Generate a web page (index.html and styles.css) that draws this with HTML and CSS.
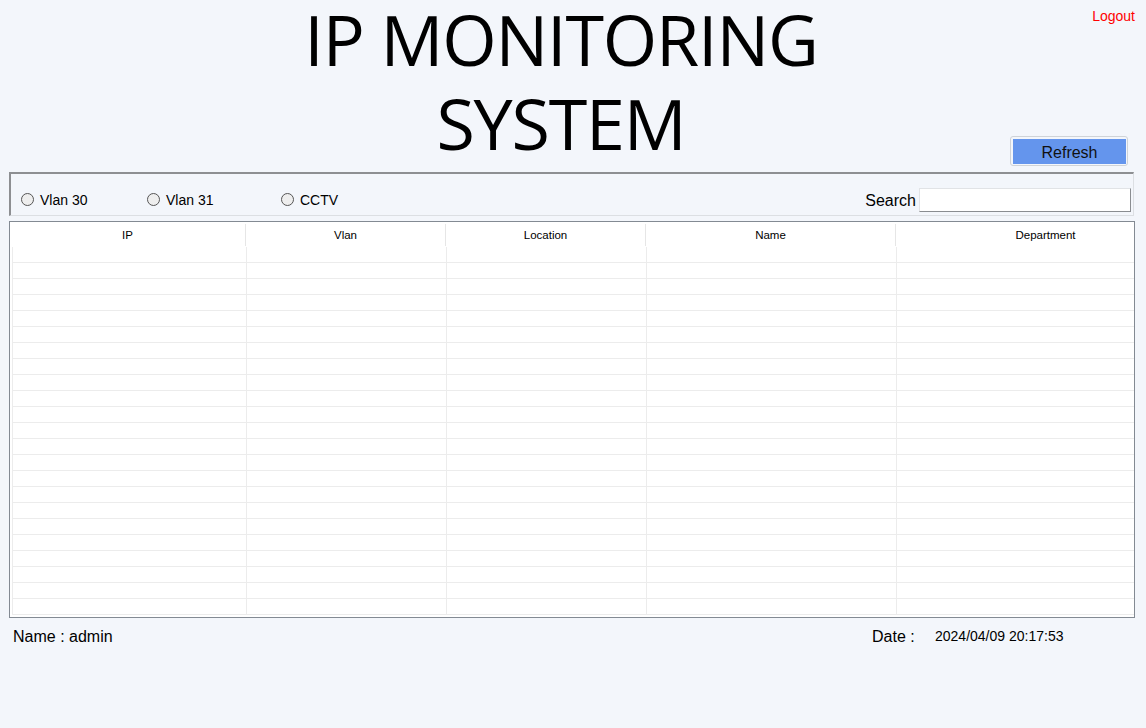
FILE: index.html
```html
<!DOCTYPE html>
<html>
<head>
<meta charset="utf-8">
<link rel="stylesheet" href="styles.css">
</head>
<body>
<div class="page">
  <header class="top">
    <h1 class="title"><span class="tl">IP MONITORING</span><span class="tl">SYSTEM</span></h1>
    <a class="logout" href="#">Logout</a>
    <div class="refresh-wrap"><button class="refresh">Refresh</button></div>
  </header>

  <section class="filter">
    <label class="opt opt-a"><input type="radio" name="vlan" class="radio"><span>Vlan 30</span></label>
    <label class="opt opt-b"><input type="radio" name="vlan" class="radio"><span>Vlan 31</span></label>
    <label class="opt"><input type="radio" name="vlan" class="radio"><span>CCTV</span></label>
    <div class="search">
      <span class="search-label">Search</span>
      <input class="search-input" type="text">
    </div>
  </section>

  <section class="grid">
    <div class="grid-head">
      <div class="hc c1">IP</div>
      <div class="hc c2">Vlan</div>
      <div class="hc c3">Location</div>
      <div class="hc c4">Name</div>
      <div class="hc c5">Department</div>
    </div>
    <div class="grid-body" id="body"></div>
  </section>

  <footer class="foot">
    <div class="foot-name">Name : admin</div>
    <div class="foot-date">Date :</div>
    <div class="foot-val">2024/04/09 20:17:53</div>
  </footer>
</div>
<script>
  var b = document.getElementById('body');
  var html = '';
  for (var i = 0; i < 23; i++) {
    html += '<div class="row"><div class="dc"></div><div class="dc"></div><div class="dc"></div><div class="dc"></div><div class="dc"></div></div>';
  }
  b.innerHTML = html;
</script>
</body>
</html>
```
FILE: styles.css
```css
* { box-sizing: border-box; }
html, body { margin: 0; padding: 0; }
body {
  background: #f3f6fb;
  font-family: "Liberation Sans", Arial, sans-serif;
  color: #000;
  width: 1146px;
  height: 728px;
  overflow: hidden;
}
.page { width: 1146px; }

.top {
  display: grid;
  height: 172px;
}
.title, .logout, .refresh-wrap { grid-area: 1 / 1; }
.title {
  margin: 0;
  padding-right: 24px;
  justify-self: stretch;
  align-self: start;
  display: flex;
  flex-direction: column;
  align-items: center;
  font-family: "Open Sans", "Noto Sans", sans-serif;
  font-weight: 400;
  font-size: 70px;
  letter-spacing: -1.2px;
}
.tl {
  display: block;
  height: 84px;
  line-height: 78px;
  overflow: visible;
  white-space: nowrap;
}
.logout {
  justify-self: end;
  align-self: start;
  margin: 8px 11px 0 0;
  color: #ff0000;
  font-size: 14px;
  text-decoration: none;
}
.refresh-wrap {
  justify-self: end;
  align-self: end;
  margin: 0 18px 6px 0;
  width: 118px;
  height: 30px;
  border: 1px solid #cfd3d8;
  border-radius: 3px;
  padding: 2px 1px 1px 2px;
  background: #f3f6fb;
}
.refresh {
  display: block;
  width: 100%;
  height: 100%;
  border: none;
  margin: 0;
  padding: 2px 0 0 0;
  background: #6495ed;
  color: #111;
  font-family: "Liberation Sans", Arial, sans-serif;
  font-size: 16px;
}

.filter {
  margin-left: 9px;
  width: 1125px;
  height: 44px;
  border-top: 2px solid #8d8f92;
  border-left: 2px solid #8d8f92;
  border-right: 1px solid #dcdfe3;
  border-bottom: 1px solid #dcdfe3;
  display: flex;
  align-items: center;
  padding: 10px 2px 0 10px;
}
.opt {
  display: flex;
  align-items: center;
  gap: 6px;
  font-size: 14px;
}
.opt-a { width: 126px; }
.opt-b { width: 134px; }
.radio {
  -webkit-appearance: none;
  appearance: none;
  margin: 0;
  width: 13px;
  height: 13px;
  border: 1px solid #555;
  border-radius: 50%;
  background: #eeeeee;
}
.search {
  margin-left: auto;
  display: flex;
  align-items: center;
  gap: 3px;
}
.search-label { font-size: 16px; padding-top: 2px; }
.search-input {
  width: 212px;
  height: 24px;
  margin: 0;
  background: #fff;
  border: 1px solid #e1e3e6;
  border-right-color: #8a8d91;
  border-bottom-color: #8a8d91;
}

.grid {
  margin: 5px 0 0 9px;
  width: 1126px;
  height: 397px;
  border: 1px solid #838a93;
  background: #fff;
  overflow: hidden;
}
.grid-head {
  display: grid;
  grid-template-columns: 236px 200px 200px 250px 300px;
  height: 25px;
}
.hc {
  font-size: 11.5px;
  text-align: center;
  padding-top: 4px;
  border-right: 1px solid #e6e6e6;
  margin: 2px 0 1px 0;
  line-height: 14px;
}
.grid-body { padding-left: 2px; }
.row {
  display: grid;
  grid-template-columns: 234px 200px 200px 250px 300px;
  height: 16px;
  border-bottom: 1px solid #ececec;
}
.dc { border-left: 1px solid #ececec; }

.foot {
  display: grid;
  grid-template-columns: 859px 63px 1fr;
  padding-left: 13px;
  margin-top: 9px;
  align-items: start;
}
.foot-name, .foot-date { font-size: 16px; }
.foot-name { padding-top: 1px; }
.foot-date { padding-top: 1px; }
.foot-val { font-size: 14px; padding-top: 1px; }
```
